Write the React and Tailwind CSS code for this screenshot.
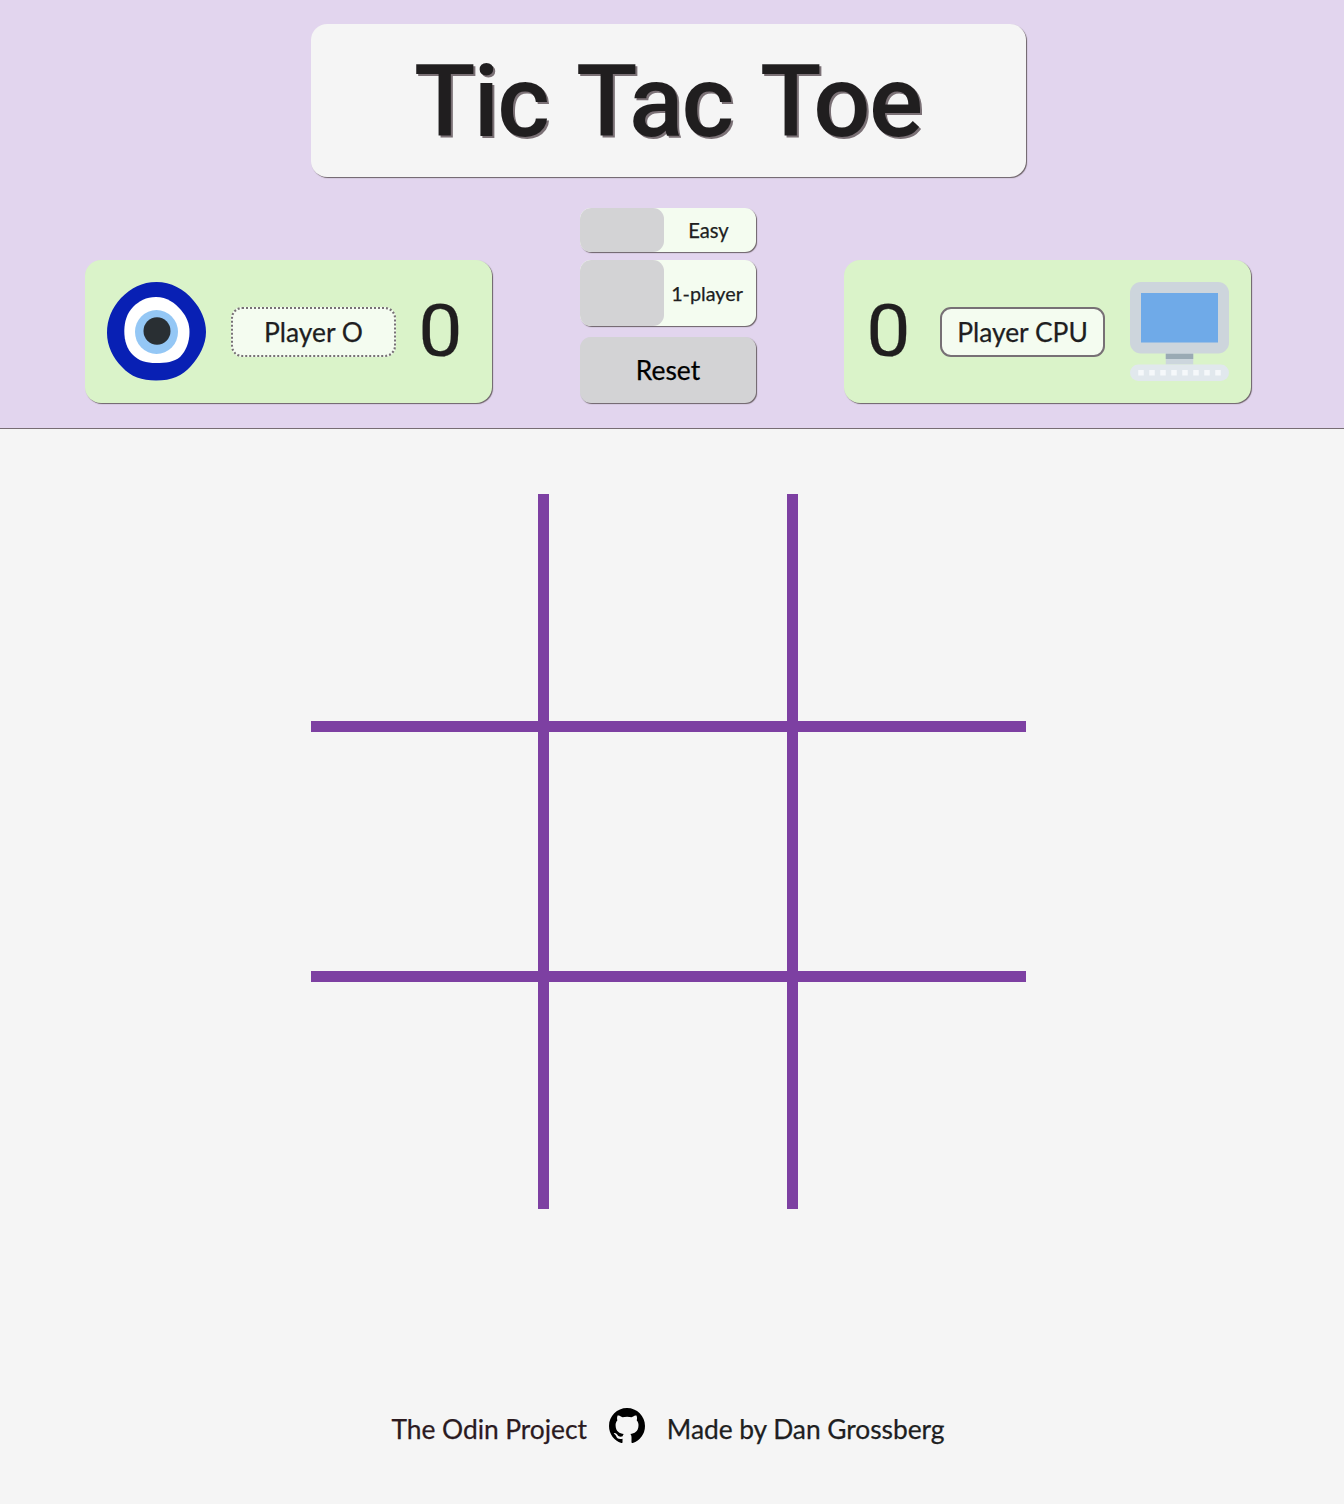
import React from "react";

const edge = "shadow-[1px_1px_1px_#6b6166]";

function Eye() {
  return (
    <svg className="block h-[99px] w-[99px] shrink-0" viewBox="0 0 99 99">
      <path fill="#0820b4" d="M49.500 0C64 0 77 7 86 18C94 27 99 38 99 50C99 63 92 75 84 84C75 94 65 98.500 49 98.500C35 98.500 24 95 15 85C6 76 0 64 0 51C0 37 5 26 14 16C24 6 35 0 49.500 0Z" />
      <path fill="#fff" d="M49 15C60 15 68 21 74 28C80 35 82.500 42 82.500 50C82.500 60 79 69 73 75C67 80 59 81 49 81C39 81 32 79 26 73C20 67 17.300 59 17.300 49C17.300 40 20 31 26 25C32 19 39 15 49 15Z" />
      <ellipse cx="49.500" cy="50" rx="21.500" ry="22" fill="#94c7f5" />
      <ellipse cx="50" cy="49" rx="13.500" ry="13.700" fill="#292f33" />
    </svg>
  );
}

function Computer() {
  return (
    <svg className="block h-[99px] w-[99px] shrink-0" viewBox="0 0 36 36">
      <path fill="#ccd6dd" d="M13 24h10v6H13z" />
      <path fill="#9aaab4" d="M13 26h10v2H13z" />
      <path fill="#cdd5dc" d="M36 22a4 4 0 0 1-4 4H4a4 4 0 0 1-4-4V4a4 4 0 0 1 4-4h28a4 4 0 0 1 4 4v18z" />
      <path fill="#6faae8" d="M4 4h28v18H4z" />
      <path fill="#e1e8ed" d="M36 33a3 3 0 0 1-3 3H3a3 3 0 1 1 0-6h30a3 3 0 0 1 3 3z" />
      <path fill="#f5f8fa" d="M3 32h2v2H3zm4 0h2v2H7zm4 0h2v2h-2zm4 0h2v2h-2zm4 0h2v2h-2zm4 0h2v2h-2zm4 0h2v2h-2zm4 0h2v2h-2z" />
    </svg>
  );
}

function Score() {
  return (
    <div className="flex h-[53px] w-[38px] shrink-0 items-center justify-center font-['Roboto',sans-serif] text-[73px] leading-[53px]">
      <span className="inline-block scale-x-[1.08] [-webkit-text-stroke:0.2px_#201e1f]">0</span>
    </div>
  );
}

function Name({ children, dotted }) {
  return (
    <div
      className={
        "flex h-[50px] w-[165px] shrink-0 items-center justify-center rounded-[11px] border-2 border-[#777075] bg-[#f4fcf0] pt-px whitespace-nowrap " +
        (dotted ? "border-dotted" : "border-solid")
      }
    >
      {children}
    </div>
  );
}

function Toggle({ label, tall }) {
  return (
    <div
      className={
        "flex w-[176px] overflow-hidden rounded-[11px] bg-[#f4fcf0] " +
        edge +
        (tall ? " h-[66px]" : " h-[44px]")
      }
    >
      <div className="w-[84px] shrink-0 rounded-[11px] bg-[#d3d3d5]" />
      <div
        className={
          "flex flex-1 items-center justify-center pt-px " +
          (tall ? "pr-[6px] text-[19.8px]" : "pr-[3px] text-[20.2px]")
        }
      >
        {label}
      </div>
    </div>
  );
}

export default function App() {
  return (
    <div className="flex h-[1504px] flex-col bg-[#f5f5f5] font-['Lato',sans-serif] text-[26.4px] leading-[33px] text-[#201e1f] [-webkit-text-stroke:0.25px_currentColor]">
      <header className="h-[429px] border-b border-[#776d73] bg-[#e2d5ee] pt-[24px]">
        <div className="flex flex-col">
          <h1
            className={
              "ml-[311px] flex h-[153px] w-[715px] rounded-[16px] bg-[#f5f5f5] pt-[17px] pl-[103px] font-['Roboto',sans-serif] text-[101px] leading-[122px] font-medium tracking-[-2px] [-webkit-text-stroke:0] [text-shadow:2px_2px_0_#7b7176] " +
              edge
            }
          >
            <span className="w-[162px]">Tic</span>
            <span className="w-[184px]">Tac</span>
            <span className="tracking-[-1.5px]">Toe</span>
          </h1>
          <div className="mt-[31px] ml-[85px] flex items-end gap-[88px]">
            <section className={"flex h-[143px] w-[407px] items-center rounded-[16px] bg-[#daf3c9] pl-[22px] " + edge}>
              <Eye />
              <div className="w-[25px]" />
              <Name dotted>Player O</Name>
              <div className="w-[26px]" />
              <Score />
            </section>
            <div className="flex flex-col">
              <Toggle label="Easy" />
              <div className="h-[8px]" />
              <Toggle label="1-player" tall />
              <button className={"mt-[11px] h-[66px] w-[176px] rounded-[11px] bg-[#d3d3d5] pt-px text-black " + edge}>
                Reset
              </button>
            </div>
            <section className={"flex h-[143px] w-[407px] items-center rounded-[16px] bg-[#daf3c9] pl-[26px] " + edge}>
              <Score />
              <div className="w-[32px]" />
              <Name>Player CPU</Name>
              <div className="w-[25px]" />
              <Computer />
            </section>
          </div>
        </div>
      </header>
      <main className="mt-[65px] ml-[311px] grid h-[715px] w-[715px] grid-cols-[238px_249px_228px] grid-rows-[238px_250px_227px]">
        <div className="border-r-[11px] border-b-[11px] border-[#7d40a2]" />
        <div className="border-r-[11px] border-b-[11px] border-[#7d40a2]" />
        <div className="border-b-[11px] border-[#7d40a2]" />
        <div className="border-r-[11px] border-b-[11px] border-[#7d40a2]" />
        <div className="border-r-[11px] border-b-[11px] border-[#7d40a2]" />
        <div className="border-b-[11px] border-[#7d40a2]" />
        <div className="border-r-[11px] border-[#7d40a2]" />
        <div className="border-r-[11px] border-[#7d40a2]" />
        <div />
      </main>
      <footer className="mt-[199px] flex w-[1336px] justify-center gap-[22px] tracking-[-0.06px] whitespace-nowrap">
        <a className="pt-[5px] text-[#2b1a1f]">The Odin Project</a>
        <svg className="h-[36px] w-[36px]" viewBox="0 0 16 16" fill="#000">
          <path d="M8 0C3.580 0 0 3.580 0 8c0 3.540 2.290 6.530 5.470 7.590.4.070.55-.17.55-.38 0-.19-.01-.82-.01-1.490-2.010.37-2.530-.49-2.690-.94-.09-.23-.48-.94-.82-1.130-.28-.15-.68-.52-.01-.53.63-.01 1.080.58 1.230.82.72 1.210 1.870.87 2.330.66.07-.52.28-.87.51-1.070-1.780-.2-3.640-.89-3.640-3.950 0-.87.31-1.590.82-2.150-.08-.2-.36-1.020.08-2.120 0 0 .67-.21 2.200.82.64-.18 1.320-.27 2-.27s1.360.09 2 .27c1.530-1.040 2.200-.82 2.200-.82.44 1.100.16 1.920.08 2.120.51.56.82 1.270.82 2.150 0 3.070-1.870 3.750-3.650 3.950.29.25.54.73.54 1.480 0 1.070-.01 1.930-.01 2.200 0 .21.15.46.55.38A8.010 8.010 0 0 0 16 8c0-4.420-3.580-8-8-8z" />
        </svg>
        <a className="pt-[5px]">Made by Dan Grossberg</a>
      </footer>
    </div>
  );
}
